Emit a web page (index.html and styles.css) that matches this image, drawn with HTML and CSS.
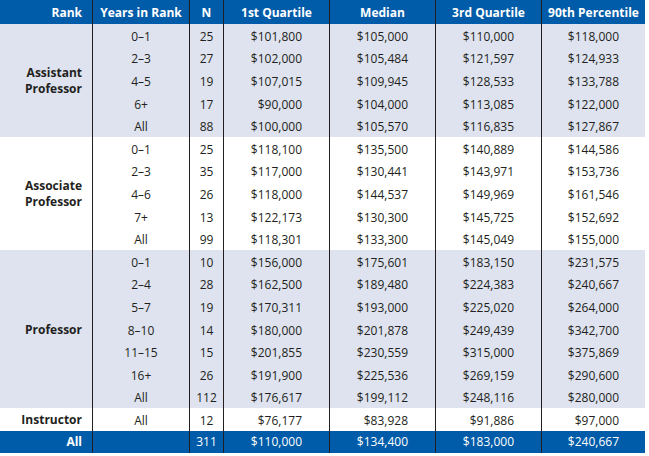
FILE: index.html
```html
<!DOCTYPE html>
<html>
<head>
<meta charset="utf-8">
<link rel="stylesheet" href="styles.css">
</head>
<body>
<table class="salary">
  <thead>
    <tr class="head">
      <th class="c-rank">Rank</th>
      <th class="c-years">Years in Rank</th>
      <th class="c-n">N</th>
      <th class="c-q1">1st Quartile</th>
      <th class="c-med">Median</th>
      <th class="c-q3">3rd Quartile</th>
      <th class="c-p90">90th Percentile</th>
    </tr>
  </thead>
  <tbody class="shaded">
    <tr><td class="rank" rowspan="5">Assistant<br>Professor</td><td class="yrs">0–1</td><td class="n">25</td><td class="money">$101,800</td><td class="money">$105,000</td><td class="money">$110,000</td><td class="money last">$118,000</td></tr>
    <tr><td class="yrs">2–3</td><td class="n">27</td><td class="money">$102,000</td><td class="money">$105,484</td><td class="money">$121,597</td><td class="money last">$124,933</td></tr>
    <tr><td class="yrs">4–5</td><td class="n">19</td><td class="money">$107,015</td><td class="money">$109,945</td><td class="money">$128,533</td><td class="money last">$133,788</td></tr>
    <tr><td class="yrs">6+</td><td class="n">17</td><td class="money">$90,000</td><td class="money">$104,000</td><td class="money">$113,085</td><td class="money last">$122,000</td></tr>
    <tr><td class="yrs">All</td><td class="n">88</td><td class="money">$100,000</td><td class="money">$105,570</td><td class="money">$116,835</td><td class="money last">$127,867</td></tr>
  </tbody>
  <tbody class="plain">
    <tr><td class="rank" rowspan="5">Associate<br>Professor</td><td class="yrs">0–1</td><td class="n">25</td><td class="money">$118,100</td><td class="money">$135,500</td><td class="money">$140,889</td><td class="money last">$144,586</td></tr>
    <tr><td class="yrs">2–3</td><td class="n">35</td><td class="money">$117,000</td><td class="money">$130,441</td><td class="money">$143,971</td><td class="money last">$153,736</td></tr>
    <tr><td class="yrs">4–6</td><td class="n">26</td><td class="money">$118,000</td><td class="money">$144,537</td><td class="money">$149,969</td><td class="money last">$161,546</td></tr>
    <tr><td class="yrs">7+</td><td class="n">13</td><td class="money">$122,173</td><td class="money">$130,300</td><td class="money">$145,725</td><td class="money last">$152,692</td></tr>
    <tr><td class="yrs">All</td><td class="n">99</td><td class="money">$118,301</td><td class="money">$133,300</td><td class="money">$145,049</td><td class="money last">$155,000</td></tr>
  </tbody>
  <tbody class="shaded">
    <tr><td class="rank" rowspan="7">Professor</td><td class="yrs">0–1</td><td class="n">10</td><td class="money">$156,000</td><td class="money">$175,601</td><td class="money">$183,150</td><td class="money last">$231,575</td></tr>
    <tr><td class="yrs">2–4</td><td class="n">28</td><td class="money">$162,500</td><td class="money">$189,480</td><td class="money">$224,383</td><td class="money last">$240,667</td></tr>
    <tr><td class="yrs">5–7</td><td class="n">19</td><td class="money">$170,311</td><td class="money">$193,000</td><td class="money">$225,020</td><td class="money last">$264,000</td></tr>
    <tr><td class="yrs">8–10</td><td class="n">14</td><td class="money">$180,000</td><td class="money">$201,878</td><td class="money">$249,439</td><td class="money last">$342,700</td></tr>
    <tr><td class="yrs">11–15</td><td class="n">15</td><td class="money">$201,855</td><td class="money">$230,559</td><td class="money">$315,000</td><td class="money last">$375,869</td></tr>
    <tr><td class="yrs">16+</td><td class="n">26</td><td class="money">$191,900</td><td class="money">$225,536</td><td class="money">$269,159</td><td class="money last">$290,600</td></tr>
    <tr><td class="yrs">All</td><td class="n">112</td><td class="money">$176,617</td><td class="money">$199,112</td><td class="money">$248,116</td><td class="money last">$280,000</td></tr>
  </tbody>
  <tbody class="plain">
    <tr><td class="rank">Instructor</td><td class="yrs">All</td><td class="n">12</td><td class="money">$76,177</td><td class="money">$83,928</td><td class="money">$91,886</td><td class="money last">$97,000</td></tr>
  </tbody>
  <tfoot>
    <tr class="total"><td class="rank">All</td><td class="yrs"></td><td class="n">311</td><td class="money">$110,000</td><td class="money">$134,400</td><td class="money">$183,000</td><td class="money last">$240,667</td></tr>
  </tfoot>
</table>
</body>
</html>
```

FILE: styles.css
```css
html, body {
  margin: 0;
  padding: 0;
  background: #ffffff;
}

.salary {
  border-collapse: separate;
  border-spacing: 0;
  table-layout: fixed;
  width: 645px;
  font-family: "Open Sans", "Noto Sans", sans-serif;
  font-size: 12px;
  color: #231f20;
}

.salary th,
.salary td {
  box-sizing: border-box;
  padding: 0;
  border-right: 1px solid #231f20;
  white-space: nowrap;
  line-height: 16px;
  vertical-align: middle;
}

.salary .c-p90,
.salary .last {
  border-right: none;
}

.salary .head th {
  height: 24px;
  background: #005ca8;
  color: #ffffff;
  font-weight: 700;
  text-align: center;
  padding-top: 1px;
}

.salary .head th.c-rank {
  text-align: right;
  padding-right: 10px;
}

.c-rank { width: 93px; }
.c-years { width: 97px; }
.c-n { width: 34px; }
.c-q1 { width: 106px; }
.c-med { width: 106px; }
.c-q3 { width: 106px; }
.c-p90 { width: 103px; }

.salary tbody td {
  height: 22.6px;
  padding-top: 3px;
}

.shaded td {
  background: #dee3ef;
}

.plain td {
  background: #ffffff;
}

.salary td.rank {
  text-align: right;
  padding-right: 10px;
  padding-top: 1px;
  font-weight: 700;
}

.salary td.yrs,
.salary td.n {
  text-align: center;
}

.salary td.money {
  text-align: right;
  padding-right: 27px;
}

.salary td.money.last {
  padding-right: 26px;
}

.salary .total td {
  height: 22px;
  background: #005ca8;
  color: #ffffff;
  padding-top: 1px;
}
```
